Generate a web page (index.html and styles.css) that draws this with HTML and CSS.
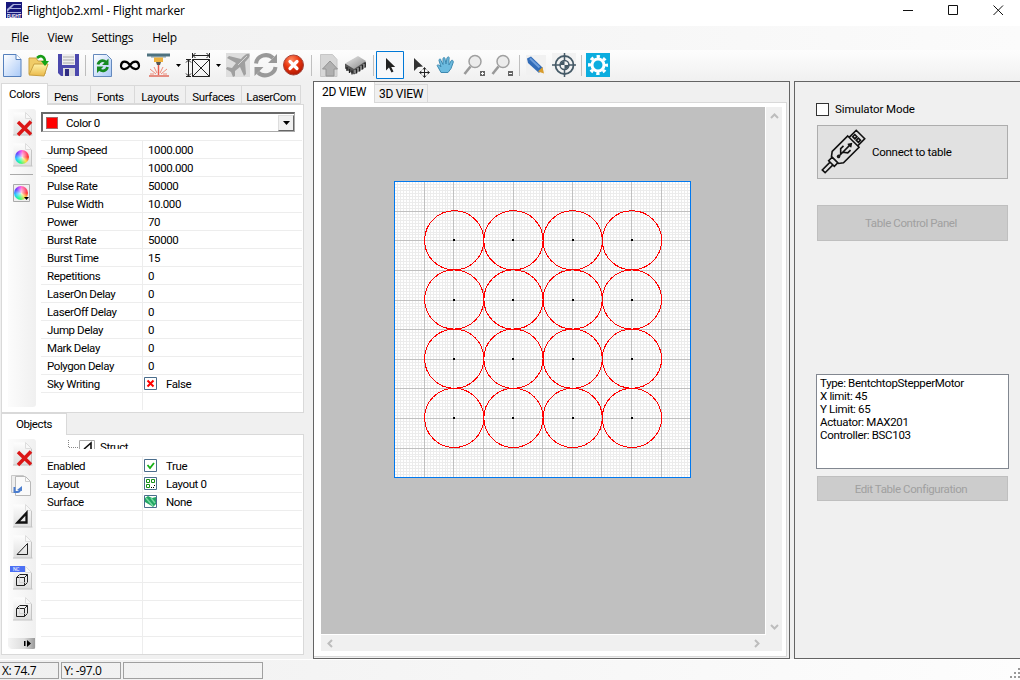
FILE: index.html
```html
<!DOCTYPE html>
<html lang="en">
<head>
<meta charset="utf-8">
<title>FlightJob2.xml - Flight marker</title>
<link rel="stylesheet" href="styles.css">
</head>
<body>
<svg width="0" height="0" class="defs">
  <defs>
    <linearGradient id="paper" x1="0" y1="0" x2="1" y2="1"><stop offset="0" stop-color="#fff"/><stop offset="1" stop-color="#a9c9f7"/></linearGradient>
    <linearGradient id="sheet" x1="0" y1="0" x2="0" y2="1"><stop offset="0" stop-color="#fdfdfd"/><stop offset="1" stop-color="#dedede"/></linearGradient>
    <linearGradient id="folder" x1="0" y1="0" x2="0" y2="1"><stop offset="0" stop-color="#fff3a8"/><stop offset="1" stop-color="#eab848"/></linearGradient>
    <radialGradient id="stop" cx=".4" cy=".25" r=".8"><stop offset="0" stop-color="#ff8a60"/><stop offset=".5" stop-color="#e8340e"/><stop offset="1" stop-color="#a81400"/></radialGradient>
    <linearGradient id="chip" x1="0" y1="0" x2="1" y2="1"><stop offset="0" stop-color="#eee"/><stop offset="1" stop-color="#888"/></linearGradient>
    <symbol id="page" viewBox="0 0 20 24"><path d="M.5.5h12l6 6v16.500h-18z" fill="url(#sheet)"/><path d="M0 23h19.500M18.500 7v16" stroke="#c4c4c4" fill="none"/><path d="M12.500.5v6h6z" fill="#f8f8f8" stroke="#ddd"/></symbol>
    <symbol id="cube" viewBox="0 0 14 14"><path d="M1.500 4.500h8v8h-8zM1.500 4.500l3-3h8l-3 3M12.500 1.500v8l-3 3" fill="none" stroke="#222"/><path d="M4.500 1.500v8h8" stroke="#ccc" fill="none" stroke-width=".7"/></symbol>
  </defs>
</svg>
<div class="window">
  <header class="titlebar">
    <svg class="logo" width="16" height="16" viewBox="0 0 16 16"><path fill="#17177c" d="M0 0h16v16H0z"/><path d="M1 10V7l6-5h8v1H8L5 6h10v1H4L1 10h14v1H1z" fill="#aab0dc"/><text x="1" y="15.500" font-size="4.500" textLength="14" fill="#fff" font-weight="bold">FLIGHT</text></svg>
    <span class="title">FlightJob2.xml - Flight marker</span>
    <svg class="winbtns" width="112" height="20" viewBox="0 0 112 20"><path d="M4 10.500h10M49.500 5.500h9v9h-9zM94.500 5.500l9.500 9.500M104 5.500l-9.500 9.500" fill="none" stroke="#111"/></svg>
  </header>
  <nav class="menu"><span>File</span><span>View</span><span>Settings</span><span>Help</span></nav>
  <div class="toolbar">
    <svg width="616" height="30" viewBox="0 50 616 30">
      <path d="M3.500 54.500h12.500l5 5v17h-17.500z" fill="url(#paper)" stroke="#5580bd"/><path d="M16 54.500v5h5" fill="#fff" stroke="#5580bd"/>
      <path d="M29 74V58h7l2 3h7v13z" fill="#f0cc68" stroke="#c9a040"/><path d="M29 75l5-11h14l-4 12z" fill="url(#folder)" stroke="#c9a040"/><path d="M37 58c4-4 8-1 8 4" fill="none" stroke="#169b16" stroke-width="2.500"/><path d="M41 61h8l-4 5z" fill="#16a516"/>
      <path d="M58 54h21v22H61l-3-3z" fill="#4b48ad"/><path d="M62 54h13v11H62z" fill="#eee"/><path d="M63 57h11M63 60h11M63 63h11" stroke="#aaa"/><path d="M63 68h12v8H63z" fill="#ddd"/><path d="M65 69h4v7h-4z" fill="#302d82"/>
      <path d="M85.500 55v21" stroke="#bdbdbd"/>
      <path d="M93.500 54.500h13l5 5v17h-18z" fill="url(#paper)" stroke="#6489bd"/><path d="M98 64.500c1-4 5-5 8-2.500M107.500 67c-1 4-5 5-8 2.500" fill="none" stroke="#168a22" stroke-width="2.800"/><path d="M108.500 58.500v6.500h-6.500zM97 73v-6.500h6.500z" fill="#168a22"/>
      <path d="M130 65.300c-3-5-8.500-5-9 0s6 5 9 0 8.500-5 9 0-6 5-9 0z" fill="none" stroke="#000" stroke-width="2.200"/>
      <path d="M147 53.500h23v3h-23z" fill="#4e7280"/><path d="M151 56h15v1.500h-15z" fill="#7d98a3"/><path d="M154 57.500h9v4.500h-9z" fill="#edb13d"/><path d="M156 62h5l-1 3h-3z" fill="#555"/><path d="M158.500 65v10" stroke="#e85c4e" stroke-width="1.500"/><path d="M149 76h20" stroke="#e06b5c" stroke-width="1.500"/><path d="M150 69l6 5M167 69l-6 5M154 67l3 6M163 67l-3 6M150 74h4M163 74h4" stroke="#ef8b79" fill="none"/>
      <path d="M176 64h5l-2.500 3zM216 64h5l-2.500 3z" fill="#000"/>
      <path d="M192.500 59.500h17v17h-17zM192.500 59.500l17 17M209.500 59.500l-17 17M192.500 53v5M209.500 53v5M193 55.500h16M195.500 53l-2.500 2.500 2.500 2.500M206.500 53l2.500 2.500-2.500 2.500M186 59.500h5M186 76.500h5M188.500 60v16M186 62.500l2.500-2.500 2.500 2.500M186 73.500l2.500 2.500 2.500-2.500" fill="none" stroke="#222"/>
      <path d="M226 53h24v24h-24z" fill="#dedede"/><path d="M249 54c-3-1-6 3-8 5l-12-3-2 2 9 5-4 5-5-1-1 2 5 3 2 5 2-1v-5l5-4 4 9 2-2-1-12c3-3 6-6 4-8z" fill="#a0a0a0"/><path d="M247 56l-9 9" stroke="#d4d4d4"/>
      <path d="M256 63.500c1-8 11-11 17-5.500M275.500 67c-1 8-12 11-17.500 5.500" stroke="#999" fill="none" stroke-width="4"/><path d="M277 54v9h-9zM254.500 76v-9h9z" fill="#999"/>
      <circle cx="293.500" cy="65" r="10" fill="url(#stop)" stroke="#a5443a"/><path d="M290 61.500l7 7M297 61.500l-7 7" stroke="#fff" stroke-width="3.200" stroke-linecap="round"/>
      <path d="M311.500 55v21M373.500 55v21M519.500 55v21M581.500 55v21" stroke="#c0c0c0"/>
      <path d="M320.500 54.500h12l4.500 5v17h-16.500z" fill="#d7d7d7" stroke="#c7c7c7"/><path d="M322.500 69l7.500-8 7.500 8h-3.500v7h-8v-7z" fill="#b0b0b0" stroke="#949494"/>
      <path d="M345 64l13-7 8 5v5l-12 7.500-9-6z" fill="#555"/><path d="M345 63.500l13-7.500 8 5-12 8z" fill="url(#chip)"/><path d="M347 67v4M349.500 69v4M352 70.500v4M356.500 69v4.500M359.500 67v4.500M362.500 65v4.500M365 63v4.500" stroke="#222" stroke-width="1.300"/><path d="M355 70v3M358 68v4M361 66v4M364 64v4" stroke="#ccc" stroke-width=".8"/>
      <path d="M376.500 51.500h27v27h-27z" fill="#f7f8fa" stroke="#0078d7"/>
      <path d="M386 58v12.500l3-3 2.500 5 2-1-2.300-4.500h4z" fill="#222"/>
      <path d="M414 58v13l4-4 5-.5z" fill="#333"/><path d="M424.500 68v9M420 72.500h9M423 69.500l1.500-2 1.500 2M423 75.500l1.500 2 1.500-2M421.500 71l-2 1.500 2 1.500M427.500 71l2 1.500-2 1.500" fill="none" stroke="#222"/>
      <path d="M441 72.500l-3-5.500c-2-2 0-3 2-1l1 1-2-6.500c0-2 2-2 2 0l2 4v-5.500c0-2 2-2 2 0l1 5 1-6c1-2 3-1 2 1v6l2-4c1-2 3 0 2 2l-2 5.500-3 4z" fill="#6cbbdf" stroke="#3e89b0"/>
      <g id="lens"><circle cx="475" cy="61.500" r="6" fill="#ececec" stroke="#a0a0a0" stroke-width="1.500"/><path d="M470.500 66.500L464.500 74" stroke="#999" stroke-width="2.600"/><path d="M480 71h5v5h-5z" fill="#666"/></g><path d="M481 73.500h3M482.500 72v3" stroke="#fff"/>
      <use href="#lens" x="28"/><path d="M509 73.500h3" stroke="#fff"/>
      <path d="M526 55h20v20h-20z" fill="#f1f1f1"/><path d="M527 58.500l4-2 12 11.500-4 5-11-10z" fill="#326cb8"/><path d="M530 58.500l9.500 9" stroke="#6f9edb" stroke-width="2"/><path d="M538 71.500l4.500-4.500 1.500 6.500z" fill="#d89c2c"/>
      <path d="M552 53h24v24h-24z" fill="#f2f2f2"/><circle cx="564.500" cy="65" r="9" fill="none" stroke="#455a67" stroke-width="1.800"/><circle cx="564.500" cy="65" r="4.500" fill="none" stroke="#455a67" stroke-width="1.400"/><path d="M564.500 65v-4a4 4 0 0 0-4 4zM564.500 65v4a4 4 0 0 0 4-4z" fill="#455a67"/><path d="M564.500 53v8M564.500 69v8M552 65h9M568 65h8" stroke="#455a67" stroke-width="1.500"/>
      <path d="M586 53h24v24h-24z" fill="#0caddf"/><circle cx="598" cy="65" r="6" fill="none" stroke="#fff" stroke-width="3"/><circle cx="598" cy="65" r="8.500" fill="none" stroke="#fff" stroke-width="3" stroke-dasharray="3.300 3.375" stroke-dashoffset="1.650"/>
    </svg>
  </div>
  <main class="work">
    <aside class="left">
      <div class="tabs"><b class="tab on">Colors</b><b class="tab w42">Pens</b><b class="tab w45">Fonts</b><b class="tab w51">Layouts</b><b class="tab w56">Surfaces</b><b class="tab w58">LaserCom</b></div>
      <section class="pane colors">
        <svg class="strip" width="28" height="298" viewBox="8 109 28 298">
          <use href="#page" x="13" y="112" width="20" height="24"/><path d="M18 122l13 12.500M31 121.500l-13 13.500" stroke="#db1616" stroke-width="3.500"/>
          <use href="#page" x="13" y="143" width="20" height="24"/><foreignObject x="15" y="150" width="14" height="14"><div class="wheel"></div></foreignObject>
          <path d="M10 174.500h23" stroke="#aaa"/>
          <path d="M13.500 184.500h16v17h-16z" fill="#f0f0f0" stroke="#aaa"/><foreignObject x="14" y="186" width="14" height="14"><div class="wheel"></div></foreignObject><path d="M24 197h5l-2.500 3z" fill="#000"/>
        </svg>
        <div class="content">
          <div class="combo"><i class="swatch"></i><span>Color 0</span><i class="drop"><svg width="7" height="4" viewBox="0 0 7 4"><path d="M0 0h7L3.500 4z"/></svg></i></div>
          <div class="grid g1">
            <div><span>Jump Speed</span><span>1000.000</span></div>
            <div><span>Speed</span><span>1000.000</span></div>
            <div><span>Pulse Rate</span><span>50000</span></div>
            <div><span>Pulse Width</span><span>10.000</span></div>
            <div><span>Power</span><span>70</span></div>
            <div><span>Burst Rate</span><span>50000</span></div>
            <div><span>Burst Time</span><span>15</span></div>
            <div><span>Repetitions</span><span>0</span></div>
            <div><span>LaserOn Delay</span><span>0</span></div>
            <div><span>LaserOff Delay</span><span>0</span></div>
            <div><span>Jump Delay</span><span>0</span></div>
            <div><span>Mark Delay</span><span>0</span></div>
            <div><span>Polygon Delay</span><span>0</span></div>
            <div><span>Sky Writing</span><span class="ic"><svg width="13" height="13"><path d="M.5.5h12v12H.5z" fill="#fff" stroke="#4a6d8c"/><path d="M3.500 3.500l6 6M9.500 3.500l-6 6" stroke="red" stroke-width="2"/></svg>False</span></div>
            <div class="last"><span></span><span></span></div>
          </div>
        </div>
      </section>
      <div class="tabs objtabs"><b class="tab on">Objects</b></div>
      <section class="pane objects">
        <svg class="strip" width="28" height="210" viewBox="8 439 28 210">
          <use href="#page" x="13" y="442" width="20" height="24"/><path d="M18 452l13 12.500M31 451.500l-13 13.500" stroke="#db1616" stroke-width="3.500"/>
          <path d="M11.500 475.500h12v17h-12z" fill="#eee" stroke="#c8c8c8"/><path d="M15.500 476.500h10l5 5v14h-15z" fill="#fafafa" stroke="#b8b8b8"/><path d="M25.500 476.500v5h5" fill="none" stroke="#ccc"/><path d="M14.500 487v5h3c2 0 2.500-1 2.500-3" stroke="#4a7dce" fill="none" stroke-width="2"/><path d="M17 490l5-4v5z" fill="#4a7dce"/>
          <use href="#page" x="13" y="504" width="20" height="24"/><path d="M17.500 522.500h9v-9.500z" fill="none" stroke="#111" stroke-width="2.300"/>
          <use href="#page" x="13" y="535" width="20" height="24"/><path d="M17 554.500h10.500v-11z" fill="none" stroke="#222"/>
          <use href="#page" x="13" y="566" width="20" height="24"/><use href="#cube" x="15" y="573" width="14" height="14"/><path d="M10 566h15v6H10z" fill="#4c70f4"/><text x="13" y="571.200" class="nc">NC</text>
          <use href="#page" x="13" y="597" width="20" height="24"/><use href="#cube" x="15" y="604" width="14" height="14"/>
          <path d="M8 638h27v11H11l-3-3z" fill="url(#grip)"/><linearGradient id="grip"><stop offset="0" stop-color="#f4f4f4"/><stop offset=".6" stop-color="#ddd"/><stop offset="1" stop-color="#999"/></linearGradient><path d="M24 641h1.500v5H24zM27 640l4 3.500-4 3.500z"/>
        </svg>
        <div class="content">
          <div class="tree"><svg width="55" height="9" viewBox="41 440 55 9"><path d="M68.500 440v7M69 447.500h10" stroke="#888" stroke-dasharray="1 1"/><path d="M79.500 449v-8.500h15v8.500" fill="#fff" stroke="#aaa"/><path d="M84 449l7-6v6" fill="none" stroke="#111" stroke-width="1.600"/></svg><span>Struct</span></div>
          <div class="grid g2">
            <div><span>Enabled</span><span class="ic"><svg width="13" height="13"><path d="M.5.5h12v12H.5z" fill="#fff" stroke="#4a6d8c"/><path d="M3.500 6l2.500 3 4-5" stroke="#15b015" stroke-width="1.800" fill="none"/></svg>True</span></div>
            <div><span>Layout</span><span class="ic"><svg width="13" height="13"><path d="M.5.5h12v12H.5z" fill="#fff" stroke="#4a6d8c"/><path d="M2.500 2.500h3v3h-3zM7.500 2.500h3v3h-3zM2.500 7.500h3v3h-3z" fill="none" stroke="#159015"/><path d="M7 10h1v1H7zM9 10h1v1H9zM10 8h1v1h-1z"/></svg>Layout 0</span></div>
            <div><span>Surface</span><span class="ic"><svg width="13" height="13"><path d="M.5.5h12v12H.5z" fill="#fff" stroke="#4a6d8c"/><path d="M1 3l3-2 4 2 4-1v7l-3 3-3-2-5-3z" fill="#22a564"/><path d="M2 3l7 8M7 3l4 5" stroke="#77d8a0" stroke-width="1.500"/></svg>None</span></div>
            <div><span></span><span></span></div><div><span></span><span></span></div><div><span></span><span></span></div><div><span></span><span></span></div><div><span></span><span></span></div><div><span></span><span></span></div><div><span></span><span></span></div><div class="last"><span></span><span></span></div>
          </div>
        </div>
      </section>
    </aside>
    <section class="center">
      <div class="vtabs"><b class="on">2D VIEW</b><b>3D VIEW</b></div>
      <div class="viewpane">
        <div class="canvas"><svg id="plot" width="444" height="527" viewBox="321 107 444 527" shape-rendering="crispEdges"></svg></div>
        <div class="vbar"><svg width="9" height="6"><path d="M1 5l3.500-3.500L8 5"/></svg><svg width="9" height="6"><path d="M1 1l3.500 3.500L8 1"/></svg></div>
        <div class="hbar"><svg width="6" height="9"><path d="M5 1L1.500 4.500 5 8"/></svg><svg width="6" height="9"><path d="M1 1l3.500 3.500L1 8"/></svg></div>
      </div>
    </section>
    <aside class="right">
      <label class="sim"><i></i><span>Simulator Mode</span></label>
      <div class="btn connect">
        <svg width="46" height="46" viewBox="0 0 46 46"><g transform="translate(.5 -.5) rotate(45 23 23)" fill="none" stroke="#111" stroke-width="1.600"><path d="M15 9h16v22l-3 4H18l-3-4zM17 9V-1h12V9M19 3h3v3h-3zM24 3h3v3h-3zM19 35h8v5h-8zM21 40v11h4V40M23 13v17M23 27l-4-4v-4M23 24l4-3v-4M21 15l2-3 2 3"/><circle cx="23" cy="30" r="1"/></g></svg>
        <span>Connect to table</span>
      </div>
      <div class="btn off control">Table Control Panel</div>
      <div class="info"><div>Type: BentchtopStepperMotor</div><div>X limit: 45</div><div>Y Limit: 65</div><div>Actuator: MAX201</div><div>Controller: BSC103</div></div>
      <div class="btn off edit">Edit Table Configuration</div>
    </aside>
  </main>
  <footer class="status"><span class="s1">X: 74.7</span><span class="s2">Y: -97.0</span><span class="s3"></span><svg class="sizer" width="10" height="10"><path d="M8 0h2v2H8zM4 4h2v2H4zM8 4h2v2H8zM0 8h2v2H0zM4 8h2v2H4zM8 8h2v2H8z" fill="#999"/></svg></footer>
</div>
<script src="plot.js"></script>
</body>
</html>
```
FILE: plot.js
```js
// Draws the marking field: fine grid, major grid, circles and centre points.
const plot = document.getElementById("plot");
const left = 394, top0 = 181, size = 296;
const path = (d, stroke, fill) => `<path d="${d}" stroke="${stroke}" fill="${fill}"/>`;
const lines = (n) => {
  let d = "";
  for (let i = 1; i < n; i++) {
    const p = Math.round(i * size / n + 0.2) + 0.5;
    d += `M${left + p} ${top0}v${size}M${left} ${top0 + p}h${size}`;
  }
  return d;
};
let out = path(`M${left + .5} ${top0 + .5}h${size}v${size}h-${size}z`, "none", "#fff");
out += path(lines(100), "#ececec", "none") + path(lines(10), "#c0c0c0", "none");
for (let r = 0; r < 4; r++) {
  for (let c = 0; c < 4; c++) {
    const x = 454 + c * 59.25, y = 240.3 + r * 59.2;
    out += `<circle cx="${x + .2}" cy="${y}" r="29.6" fill="none" stroke="#f00"/>`;
    out += `<rect x="${Math.round(x) - 1}" y="${Math.round(y) - 1}" width="2" height="2"/>`;
  }
}
out += path(`M${left + .5} ${top0 + .5}h${size}v${size}h-${size}z`, "#0078ef", "none");
plot.innerHTML = out;
```
FILE: styles.css
```css
* { box-sizing: border-box; }
body { margin: 0; font: 11.5px/14px Roboto, "Liberation Sans", sans-serif; letter-spacing: -0.4px; color: #000; }
svg { display: block; flex: none; }
.defs { position: absolute; }
.window { width: 1020px; height: 680px; background: #f0f0f0; display: flex; flex-direction: column; overflow: hidden; }
.titlebar { height: 26px; background: #fff; display: flex; align-items: flex-start; padding: 2px 11px 0 6px; letter-spacing: -0.17px; }
.title { margin: 1px 0 0 5px; font: 12px/16px "Open Sans", sans-serif; }
.winbtns { margin: -2px -2px 0 auto; }
.menu { height: 24px; display: flex; padding: 3px 0 0 11px; gap: 19px; font: 12px/18px "Open Sans", sans-serif; background: linear-gradient(90deg, #f0f0f0, #fbfbfb); letter-spacing: -0.35px; }
.toolbar { height: 31px; background: linear-gradient(#fdfdfd, #f0f0f0); }
.work { height: 578px; display: flex; }
.left { width: 313px; padding: 2px 0 0 1px; }
b { font-weight: normal; }
.tabs { display: flex; align-items: flex-end; height: 21px; }
.tab { height: 19px; border: 1px solid #d9d9d9; border-left: 0; text-align: center; padding-top: 4px; }
.tab.on { background: #fff; border-left: 1px solid #d9d9d9; border-bottom: 0; width: 47px; height: 22px; margin-bottom: -1px; z-index: 1; padding-top: 3px; }
.w42 { width: 43px; padding-right: 6px; } .w45 { width: 44px; padding-right: 4px; } .w51 { width: 51px; } .w56 { width: 56px; } .w58 { width: 59px; }
.pane { width: 303px; border: 1px solid #d9d9d9; background: #fff; display: flex; padding: 4px 1px 0 6px; }
.colors { height: 309px; }
.objtabs .on { width: 66px; }
.objects { height: 221px; }
.strip { background: linear-gradient(90deg, #fcfcfc, #f0f0f0); border-radius: 0 3px 3px 0; }
.content { margin-left: 5px; flex: 1; }
.wheel { width: 14px; height: 14px; border-radius: 50%; background: radial-gradient(#fffc, #fff0 60%), conic-gradient(#f7c, #f33 25%, #fd4 38%, #2f8 55%, #2cf 70%, #64f 85%, #f5e); }
.combo { margin-top: 3px; width: 254px; height: 20px; border: 1px solid #aaa; border-top: 2px solid #696969; border-left: 2px solid #696969; display: flex; align-items: center; }
.swatch { width: 12px; height: 12px; background: red; border: 1px solid #a66; margin: 0 8px 0 3px; }
.drop { margin-left: auto; width: 16px; height: 16px; background: #f0f0f0; border: 1px solid #ddd; border-right-color: #666; border-bottom-color: #666; display: grid; place-items: center; }
.grid > div { display: flex; height: 18px; border-top: 1px solid #ededed; line-height: 18px; }
.grid span:first-child { width: 102px; padding-left: 6px; border-right: 1px solid #ededed; }
.grid span:last-child { padding-left: 5px; }
.g1 { margin-top: 8px; }
.g2 { margin-top: 7px; }
.grid .ic { display: flex; padding-left: 1px !important; gap: 9px; align-items: center; }
.tree { height: 9px; margin-top: 1px; display: flex; overflow: hidden; gap: 4px; }
.center { width: 477px; border: 1px solid #646464; }
.vtabs { display: flex; height: 20px; align-items: flex-end; font-size: 12px; letter-spacing: -0.25px; }
.vtabs b { height: 18px; width: 53px; border: 1px solid #d9d9d9; border-width: 1px 1px 0 0; padding: 2px 0 0 4px; white-space: nowrap; }
.vtabs .on { height: 21px; width: 61px; margin-bottom: -1px; background: #fff; padding: 3px 0 0 8px; border-top: 0; z-index: 1; }
.viewpane { height: 555px; width: 473px; background: #fff; border: 1px solid #d9d9d9; border-left: 0; padding: 4px 0 0 7px; display: grid; grid-template: 528px 16px / 445px 16px; }
.canvas { width: 444px; height: 527px; background: #c0c0c0; }
.vbar, .hbar { background: #f0f0f0; display: flex; justify-content: space-between; align-items: center; }
.vbar { flex-direction: column; padding: 6px 0 5px; }
.hbar { grid-column: 1 / 3; padding: 0 22px 0 6px; }
.vbar path, .hbar path { fill: none; stroke: #bdbdbd; stroke-width: 2; }
.right { width: 226px; margin-left: 4px; border: 1px solid #646464; border-right: 0; padding: 20px 0 0 21px; }
.sim { display: flex; align-items: center; gap: 6px; height: 14px; letter-spacing: -0.1px; }
.sim i { width: 13px; height: 13px; border: 1px solid #333; background: #fff; }
.btn { width: 191px; border: 1px solid #adadad; background: #e1e1e1; display: flex; align-items: center; margin-left: 1px; }
.connect { height: 54px; margin-top: 9px; padding-left: 2px; gap: 6px; letter-spacing: -0.27px; }
.off { background: #ccc; border-color: #bfbfbf; color: #a0a0a0; justify-content: center; padding-right: 3px; }
.control { height: 36px; margin-top: 26px; }
.info { width: 193px; height: 95px; margin-top: 133px; background: #fff; border: 1px solid #828790; padding: 2px 3px; line-height: 13px; letter-spacing: -0.33px; }
.edit { height: 25px; margin-top: 7px; }
.status { height: 21px; display: flex; gap: 2px; padding-top: 2px; border-top: 1px solid #fff; background: linear-gradient(90deg, #f0f0f0, #fdfdfd); font: 12px/15px "Open Sans", sans-serif; }
.status span { height: 17px; border: 1px solid #a0a0a0; padding-left: 2px; }
.s1 { width: 59px; border-left: 0 !important; } .s2 { width: 60px; } .s3 { width: 140px; }
.sizer { margin: 6px 0 0 auto; }
.nc { font-size: 5px; fill: #fff; }
```
